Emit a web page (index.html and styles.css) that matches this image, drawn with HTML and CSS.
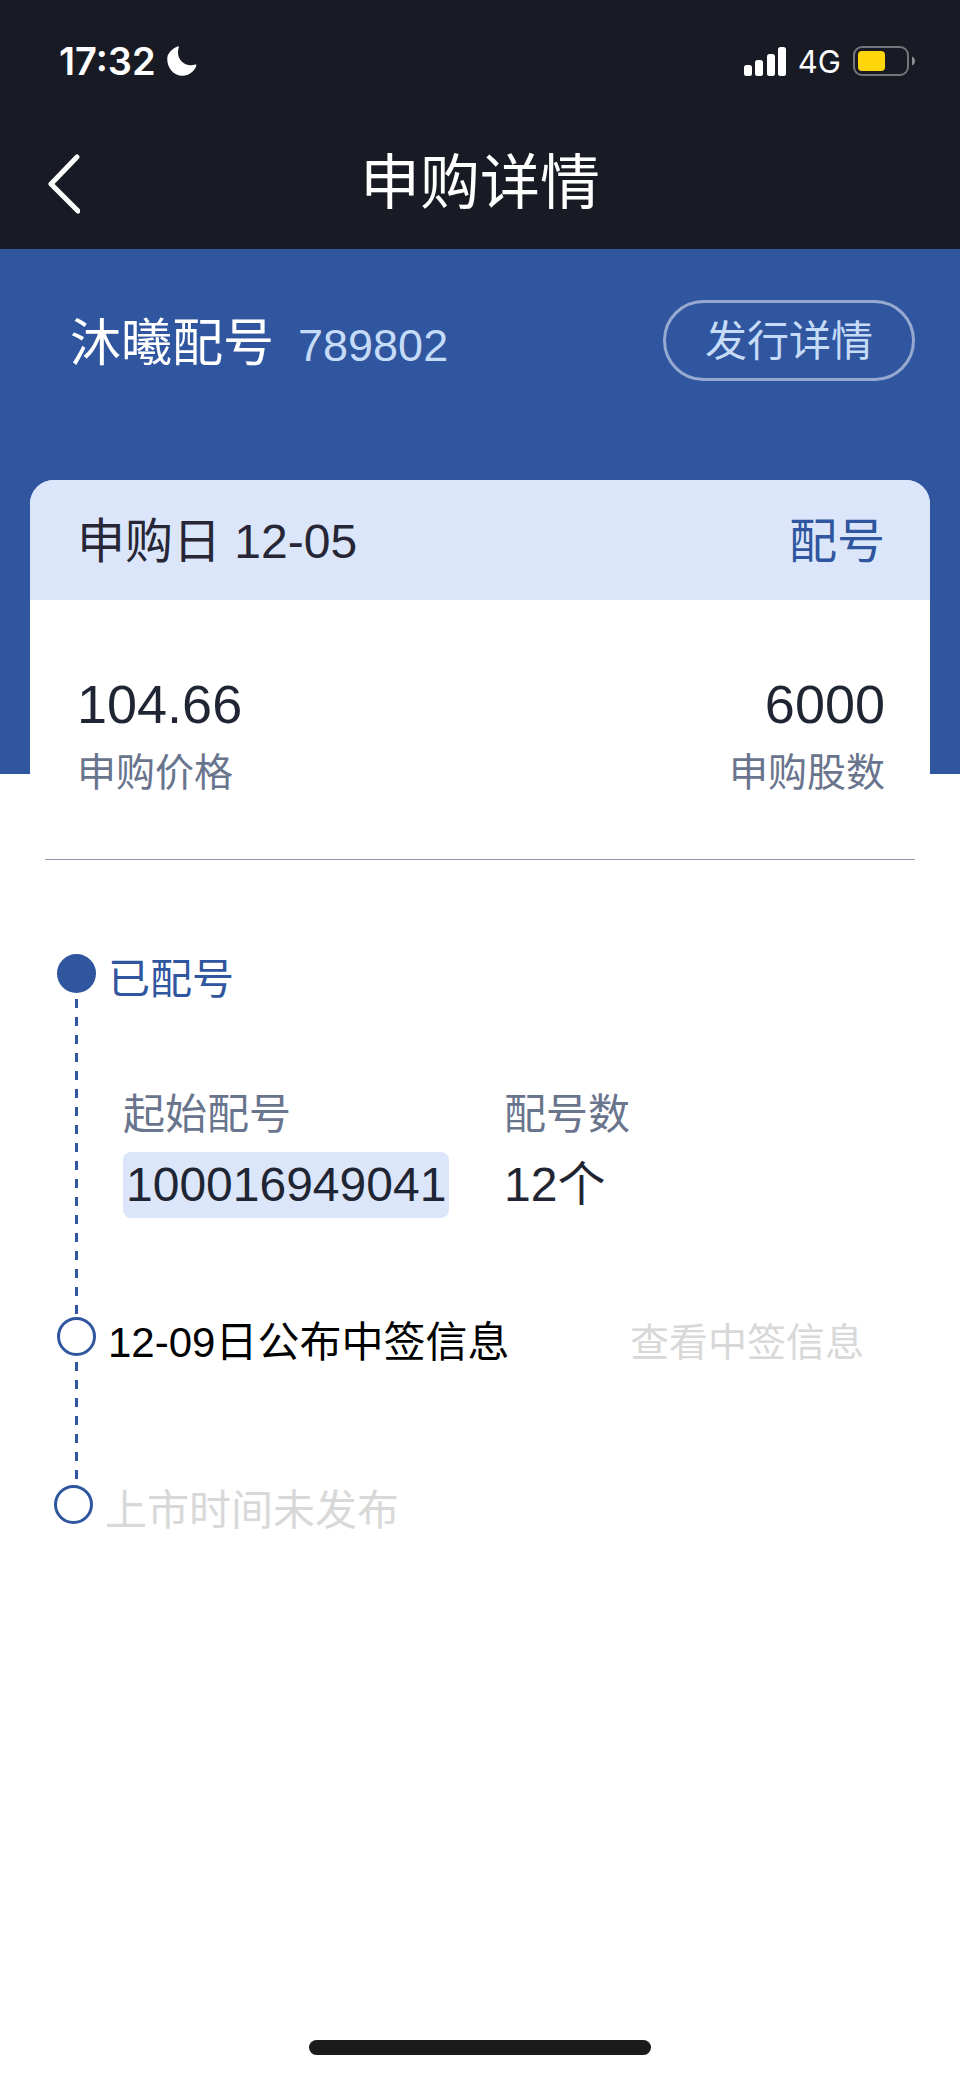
FILE: index.html
```html
<!doctype html>
<html lang="zh-CN">
  <head>
    <meta charset="utf-8">
    <meta name="viewport" content="width=device-width, initial-scale=1">
    <title>申购详情</title>
    <link rel="stylesheet" href="styles.css">
  </head>
  <body>

    <header>
      <div class="statusbar">
        <time>17:32</time>
        <svg class="moon" width="30" height="30" viewBox="0 0 30 30">
          <path d="M11.5 0.3C10.9 0 4 2.600 0.700 9.500C-1.500 18 4.500 29.700 15.500 29.700C22 29.700 27.600 25.500 29.400 19.500C29.600 18.700 29 18.300 28.200 18.600C17.500 21.800 8.500 13 11.600 2C11.900 1.100 12 0.500 11.500 0.300Z" fill="#fff"/>
        </svg>
        <div class="signals">
          <svg width="42" height="29" viewBox="0 0 42 29" fill="#fff">
            <rect x="0" y="18" width="8" height="11" rx="2.500"/>
            <rect x="11" y="13" width="8" height="16" rx="2.500"/>
            <rect x="23" y="7" width="8" height="22" rx="2.500"/>
            <rect x="34" y="0" width="8" height="29" rx="2.500"/>
          </svg>
          <span>4G</span>
          <svg width="62" height="30" viewBox="0 0 62 30">
            <rect x="1" y="1" width="54" height="28" rx="8" fill="none" stroke="#74767c" stroke-width="2"/>
            <rect x="5" y="5" width="27" height="20" rx="4" fill="#ffd60a"/>
            <path d="M59 10.500C63 12 63 18 59 19.500Z" fill="#8b8d91"/>
          </svg>
        </div>
      </div>
      <nav>
        <button class="back" aria-label="返回">
          <svg width="32" height="60" viewBox="0 0 32 60">
            <path d="M29 3L3 30L30 57" fill="none" stroke="#fff" stroke-width="5" stroke-linecap="round" stroke-linejoin="round"/>
          </svg>
        </button>
        <h1>申购详情</h1>
      </nav>
    </header>

    <section class="hero">
      <div class="stock">
        <h2>沐曦配号</h2>
        <span class="code">789802</span>
      </div>
      <a class="pill" href="#detail">发行详情</a>
    </section>

    <main id="detail">
      <div class="card-head">
        <span>申购日 12-05</span>
        <span class="state">配号</span>
      </div>

      <div class="figures">
        <div>
          <div class="num">104.66</div>
          <div class="label">申购价格</div>
        </div>
        <div class="right">
          <div class="num">6000</div>
          <div class="label">申购股数</div>
        </div>
      </div>

      <ol class="timeline">
        <li class="step done">
          <div class="rail"><i class="dot"></i><i class="line"></i></div>
          <div class="body">
            <h3>已配号</h3>
            <dl>
              <div>
                <dt>起始配号</dt>
                <dd><span class="hl">100016949041</span></dd>
              </div>
              <div>
                <dt>配号数</dt>
                <dd>12个</dd>
              </div>
            </dl>
          </div>
        </li>
        <li class="step next">
          <div class="rail"><i class="dot"></i><i class="line"></i></div>
          <div class="body">
            <h3>12-09日公布中签信息</h3>
            <button class="view" disabled>查看中签信息</button>
          </div>
        </li>
        <li class="step pending">
          <div class="rail"><i class="dot"></i></div>
          <div class="body">
            <h3>上市时间未发布</h3>
          </div>
        </li>
      </ol>
    </main>

    <div class="home"></div>

  </body>
</html>
```

FILE: styles.css
```css
* {
  margin: 0;
  padding: 0;
  box-sizing: border-box;
}
body {
  display: flex;
  flex-direction: column;
  min-height: 100vh;
  background: #fff;
  color: #1f2533;
  font-family: "Liberation Sans", "Noto Sans CJK SC", sans-serif;
}
h1, h2, h3 {
  font-weight: 400;
}
svg {
  display: block;
}
button {
  border: 0;
  background: none;
  font: inherit;
}
ol {
  list-style: none;
}

/* top bars */
header {
  background: #181b24;
  color: #fff;
  padding-bottom: 3px;
}
.statusbar {
  display: flex;
  align-items: center;
  height: 122px;
  padding: 0 45px 0 59px;
  font-family: Inter, sans-serif;
}
.statusbar time {
  font-size: 38px;
  font-weight: 600;
}
.moon {
  margin-left: 11px;
}
.signals {
  display: flex;
  align-items: center;
  gap: 12px;
  margin-left: auto;
  font-size: 31px;
}
nav {
  display: grid;
  grid-template-columns: 1fr auto 1fr;
  align-items: center;
  height: 124px;
  padding: 0 48px;
}
.back {
  justify-self: start;
}
h1 {
  font-size: 60px;
  line-height: 72px;
}

/* stock */
.hero {
  display: flex;
  justify-content: space-between;
  align-items: flex-start;
  padding: 51px 45px 390px 70px;
  background: #2f569e;
  color: #fff;
}
.stock {
  display: flex;
  align-items: baseline;
  gap: 24px;
  padding-top: 3px;
}
.hero h2 {
  font-size: 51px;
  line-height: 81px;
}
.code {
  font-size: 45px;
  color: #c5dbf8;
}
.pill {
  padding: 3px 39px 0;
  border: 3px solid #97a9d0;
  border-radius: 41px;
  font-size: 42px;
  line-height: 72px;
  color: #c5dbf8;
  text-decoration: none;
}

/* card slides up over the blue block */
main {
  margin: -294px 30px 0;
  border-radius: 24px 24px 0 0;
  background: #fff;
  overflow: hidden;
}
.card-head {
  display: flex;
  justify-content: space-between;
  padding: 3px 45px 0 47px;
  background: #dbe6fa;
  color: #262636;
  font-size: 48px;
  line-height: 117px;
}
.state {
  color: #2f569e;
}
.figures {
  display: flex;
  justify-content: space-between;
  margin: 0 15px;
  padding: 71px 30px 59px 32px;
  border-bottom: 1px solid #8f97a8;
}
.right {
  text-align: right;
}
.num {
  font-size: 54px;
  line-height: 66px;
}
.label {
  margin-top: 9px;
  font-size: 39px;
  line-height: 54px;
  color: #69748d;
}

/* timeline */
.timeline {
  padding: 94px 66px 0 0;
}
.step {
  display: flex;
  gap: 12px;
  padding-left: 27px;
}
.rail {
  display: flex;
  flex-direction: column;
  align-items: center;
  width: 39px;
}
.dot {
  width: 39px;
  height: 39px;
  border: 3px solid #2f569e;
  border-radius: 50%;
}
.done .dot {
  background: #2f569e;
}
.line {
  flex: 1;
  width: 3px;
  margin: 6px 0 3px;
  background: repeating-linear-gradient(#2f569e 0 9px, transparent 9px 18px);
}
.body {
  flex: 1;
}
h3 {
  font-size: 42px;
  line-height: 51px;
}
.done h3 {
  color: #2f569e;
}
.done .body {
  padding-bottom: 99px;
}
.next .body {
  display: flex;
  justify-content: space-between;
  align-items: flex-start;
  padding-bottom: 117px;
  color: #000;
}
.pending {
  padding-left: 24px;
}
.pending h3,
.view {
  color: #d8d8d8;
}
.view {
  font-size: 39px;
  line-height: 51px;
}
dl {
  display: grid;
  grid-template-columns: 1fr 1fr;
  column-gap: 21px;
  padding: 83px 0 0 15px;
}
dt {
  font-size: 42px;
  line-height: 54px;
  color: #69748d;
}
dd {
  margin-top: 10px;
  font-size: 48px;
  line-height: 66px;
}
.hl {
  display: inline-block;
  padding: 0 3px;
  border-radius: 8px;
  background: #dbe6fa;
}

.home {
  width: 342px;
  height: 15px;
  margin: auto auto 24px;
  border-radius: 8px;
  background: #1a1a1a;
}
```
